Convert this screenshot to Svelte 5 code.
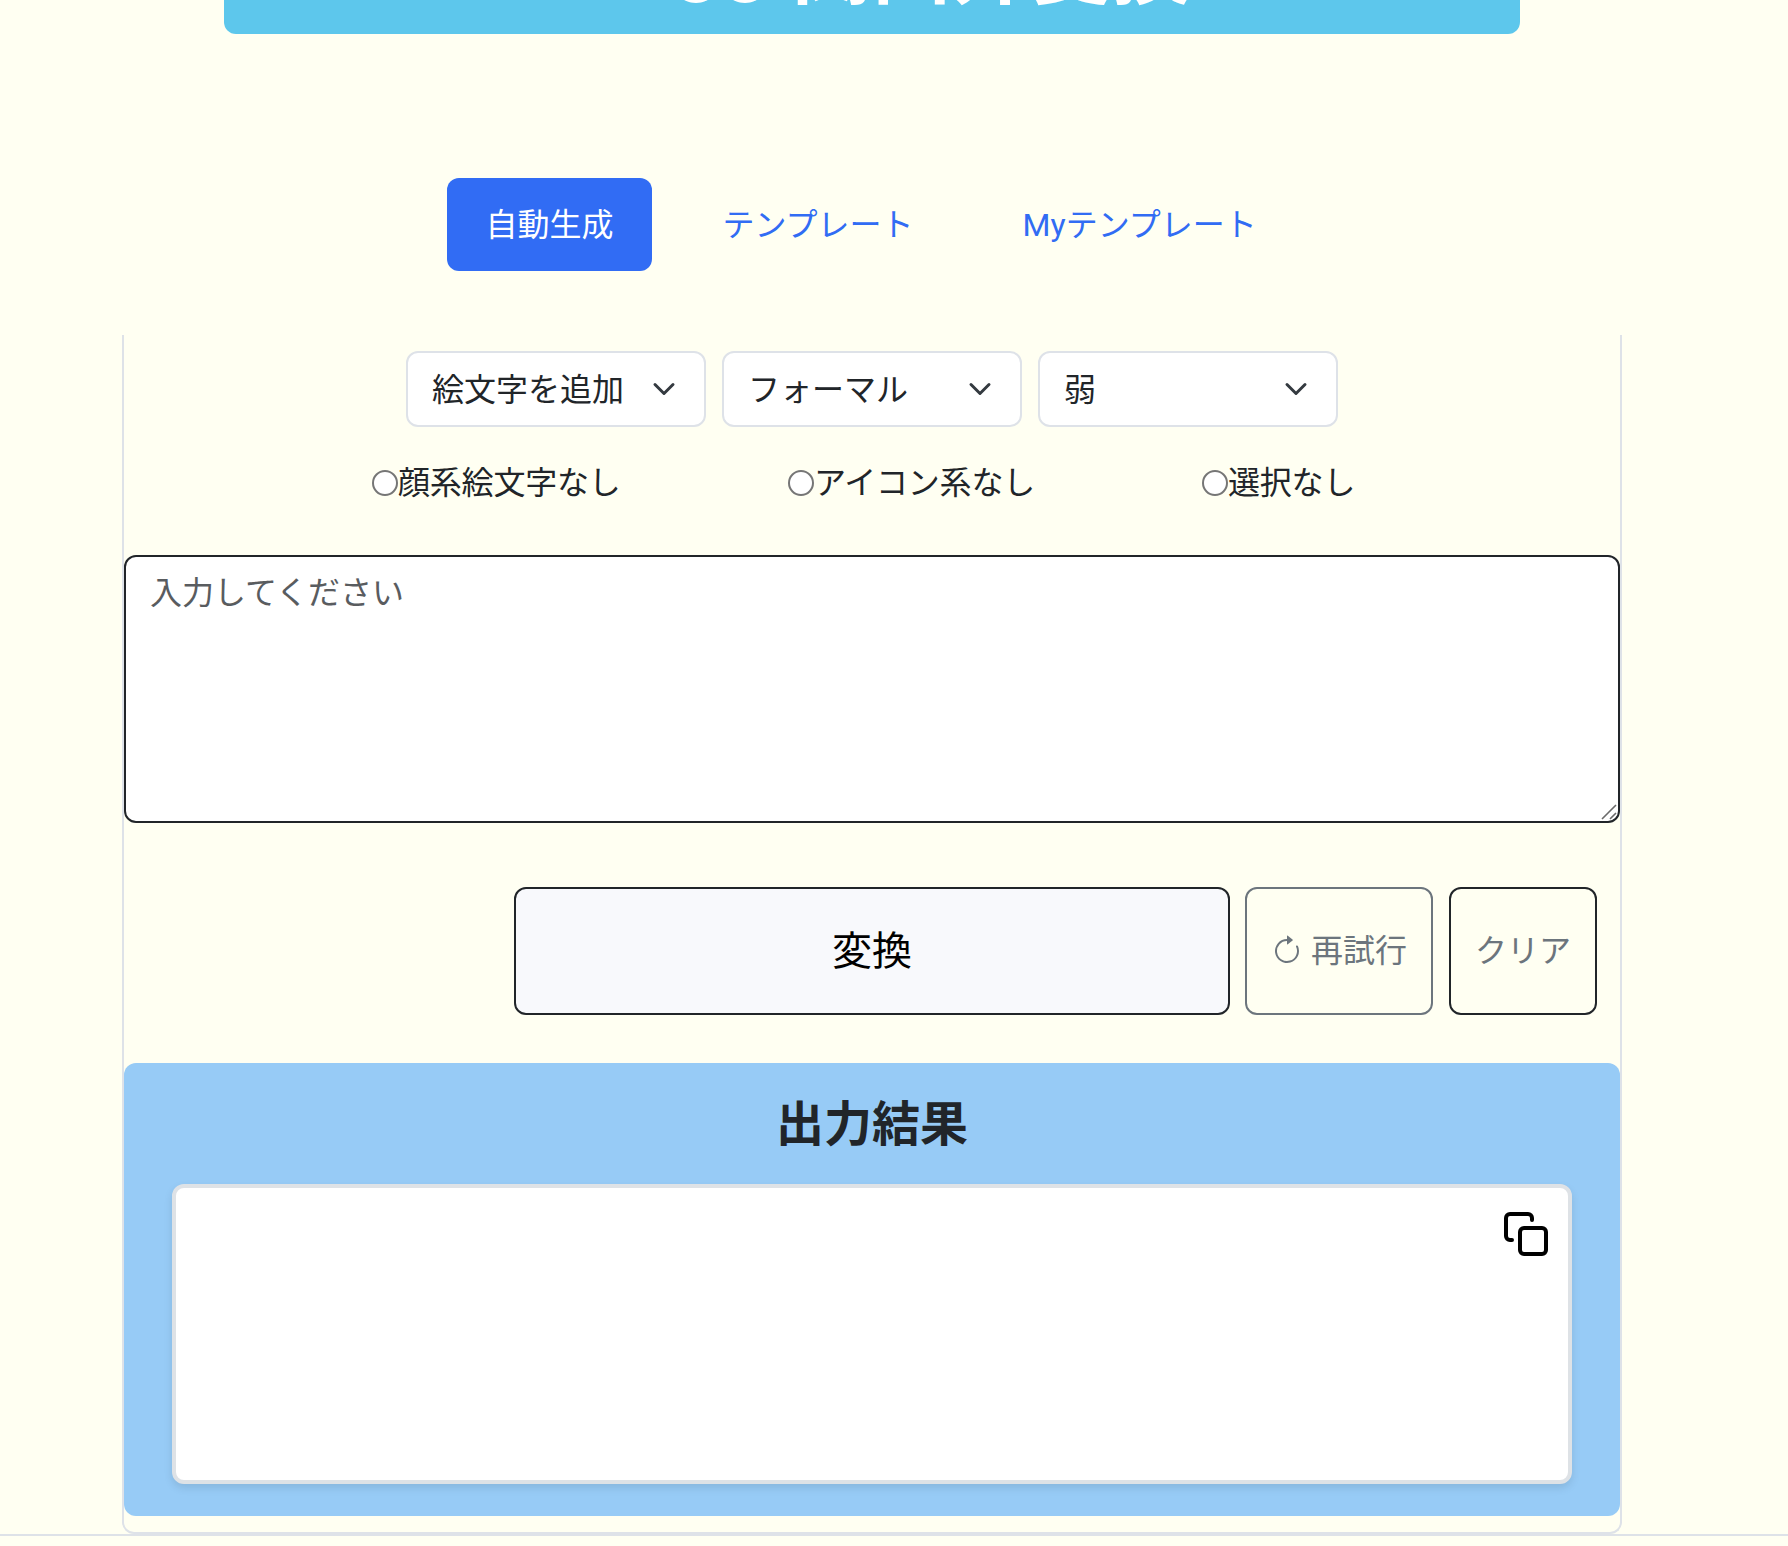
<script>
  let tabs = ["自動生成", "テンプレート", "Myテンプレート"];
  let activeTab = "自動生成";

  let selects = ["絵文字を追加", "フォーマル", "弱"];
  let radios = ["顔系絵文字なし", "アイコン系なし", "選択なし"];

  let exclusion = "";
  let input = "";
  let output = "";

  function clear() {
    input = "";
    output = "";
  }
</script>

<main>
  <header class="banner">
    <h1><span class="latin">oo</span>関西弁変換</h1>
  </header>

  <nav class="tabs">
    {#each tabs as tab}
      <button
        type="button"
        class="tab"
        class:active={tab === activeTab}
        on:click={() => (activeTab = tab)}>{tab}</button
      >
    {/each}
  </nav>

  <section class="panel">
    <div class="selects">
      {#each selects as label}
        <button type="button" class="select">
          <span>{label}</span>
          <svg viewBox="0 0 16 16" width="24" height="24">
            <path
              d="m2 5 6 6 6-6"
              fill="none"
              stroke="#343a40"
              stroke-width="2"
              stroke-linecap="round"
              stroke-linejoin="round"
            />
          </svg>
        </button>
      {/each}
    </div>

    <div class="radios">
      {#each radios as label}
        <label class="radio">
          <input type="radio" value={label} bind:group={exclusion} />
          <span>{label}</span>
        </label>
      {/each}
    </div>

    <div class="input-area">
      <textarea bind:value={input} placeholder="入力してください"></textarea>
      <svg class="grip" viewBox="0 0 16 16" width="16" height="16">
        <path d="M1 15 15 1M9 15l6-6" stroke="#6b6b6b" stroke-width="1.6" />
      </svg>
    </div>

    <div class="actions">
      <button type="button" class="btn convert">変換</button>
      <button type="button" class="btn retry">
        <svg viewBox="0 0 16 16" width="32" height="32" fill="currentColor">
          <path
            d="M8 3a5 5 0 1 0 4.546 2.914.5.5 0 0 1 .908-.417A6 6 0 1 1 8 2z"
          />
          <path
            d="M8 4.466V.534a.25.25 0 0 1 .41-.192l2.36 1.966c.12.1.12.284 0 .384L8.41 4.658A.25.25 0 0 1 8 4.466"
          />
        </svg>
        再試行
      </button>
      <button type="button" class="btn clear" on:click={clear}>クリア</button>
    </div>

    <div class="result">
      <h2>出力結果</h2>
      <div class="result-box">
        <div class="result-text">{output}</div>
        <button type="button" class="copy" aria-label="copy">
          <svg
            viewBox="0 0 24 24"
            width="48"
            height="48"
            fill="none"
            stroke="#000"
            stroke-width="2"
            stroke-linecap="round"
            stroke-linejoin="round"
          >
            <rect x="9" y="9" width="13" height="13" rx="2" />
            <path
              d="M5 15H4a2 2 0 0 1-2-2V4a2 2 0 0 1 2-2h9a2 2 0 0 1 2 2v1"
            />
          </svg>
        </button>
      </div>
    </div>
  </section>
</main>

<style>
  :global(body) {
    background: #fffff2;
    overflow: hidden;
  }

  main {
    height: 1546px;
    overflow: hidden;
    color: #212529;
    font-family: Inter, "Noto Sans CJK JP", sans-serif;
    font-size: 32px;
    line-height: 48px;
  }

  button,
  textarea {
    font: inherit;
    color: inherit;
    margin: 0;
    box-sizing: border-box;
  }

  .banner {
    width: 1296px;
    height: 130px;
    margin: -96px 0 0 224px;
    border-radius: 12px;
    background: #5dc7ec;
    color: #fff;
    text-align: center;
  }
  .banner h1 {
    margin: 0;
    padding: 16px 0 0 119px;
    font-size: 80px;
    font-weight: 700;
    line-height: 96px;
  }
  .latin {
    margin-right: 22px;
    vertical-align: -5px;
    line-height: 1;
  }

  .tabs {
    display: flex;
    gap: 32px;
    margin: 144px 0 0 447px;
  }
  .tab {
    height: 93px;
    padding: 0 38.5px;
    border: 0;
    border-radius: 12px;
    background: none;
    color: #316cf4;
    font-family: Roboto, "Noto Sans CJK JP", sans-serif;
    cursor: pointer;
  }
  .tab.active {
    background: #316cf4;
    color: #fff;
  }

  .panel {
    position: relative;
    box-sizing: border-box;
    width: 1500px;
    height: 1199px;
    margin: 64px 0 0 122px;
    border: 2px solid #dee2e8;
    border-top: 0;
    border-radius: 0 0 12px 12px;
  }
  .panel::after {
    content: "";
    position: absolute;
    top: 100%;
    left: -124px;
    width: 1788px;
    height: 2px;
    margin-top: 2px;
    background: #dee2e8;
  }

  .selects {
    display: flex;
    justify-content: center;
    gap: 16px;
    padding-top: 16px;
  }
  .select {
    display: flex;
    align-items: center;
    justify-content: space-between;
    width: 300px;
    height: 76px;
    padding: 0 28px 0 24px;
    border: 2px solid #dee2e8;
    border-radius: 12px;
    background: #fff;
  }
  .select span {
    padding-top: 2px;
  }

  .radios {
    display: grid;
    grid-template-columns: 416px 414px 415px;
    height: 48px;
    margin: 32px 0 0 248px;
  }
  .radio {
    display: flex;
    align-items: center;
    height: 48px;
  }
  .radio span {
    letter-spacing: -0.2px;
  }
  .radio input {
    appearance: none;
    box-sizing: border-box;
    width: 26px;
    height: 26px;
    margin: 0;
    border: 2px solid #767676;
    border-radius: 50%;
    background: #fff;
  }

  .input-area {
    position: relative;
    height: 268px;
    margin-top: 48px;
  }
  textarea {
    display: block;
    width: 100%;
    height: 100%;
    padding: 12px 24px;
    border: 2px solid #212529;
    border-radius: 12px;
    background: #fff;
    resize: none;
  }
  textarea::placeholder {
    color: #595c5f;
    opacity: 1;
  }
  .grip {
    position: absolute;
    right: 3px;
    bottom: 3px;
  }

  .actions {
    display: flex;
    justify-content: flex-end;
    gap: 16px;
    margin: 64px 23px 0 0;
  }
  .btn {
    display: flex;
    align-items: center;
    justify-content: center;
    height: 128px;
    padding: 0;
    border: 2px solid #212529;
    border-radius: 12px;
    background: none;
    color: #6c757d;
  }
  .convert {
    width: 716px;
    margin-right: -1px;
    background: #f8f9fc;
    color: #000;
    font-size: 40px;
  }
  .retry {
    gap: 8px;
    width: 188px;
    border-color: #6c757d;
  }
  .clear {
    width: 148px;
  }

  .result {
    box-sizing: border-box;
    height: 453px;
    margin-top: 48px;
    padding: 32px 48px;
    border-radius: 12px;
    background: #97cbf6;
  }
  .result h2 {
    margin: 0 0 31px;
    font-size: 48px;
    font-weight: 700;
    line-height: 58px;
    text-align: center;
  }
  .result-box {
    display: flex;
    justify-content: space-between;
    box-sizing: border-box;
    height: 300px;
    padding: 22px 18px;
    border: 4px solid #dee2e6;
    border-radius: 12px;
    background: #fff;
    box-shadow: 0 4px 8px rgba(0, 0, 0, 0.1);
  }
  .copy {
    width: 48px;
    height: 48px;
    padding: 0;
    border: 0;
    background: none;
  }
  .copy svg {
    display: block;
  }
</style>
